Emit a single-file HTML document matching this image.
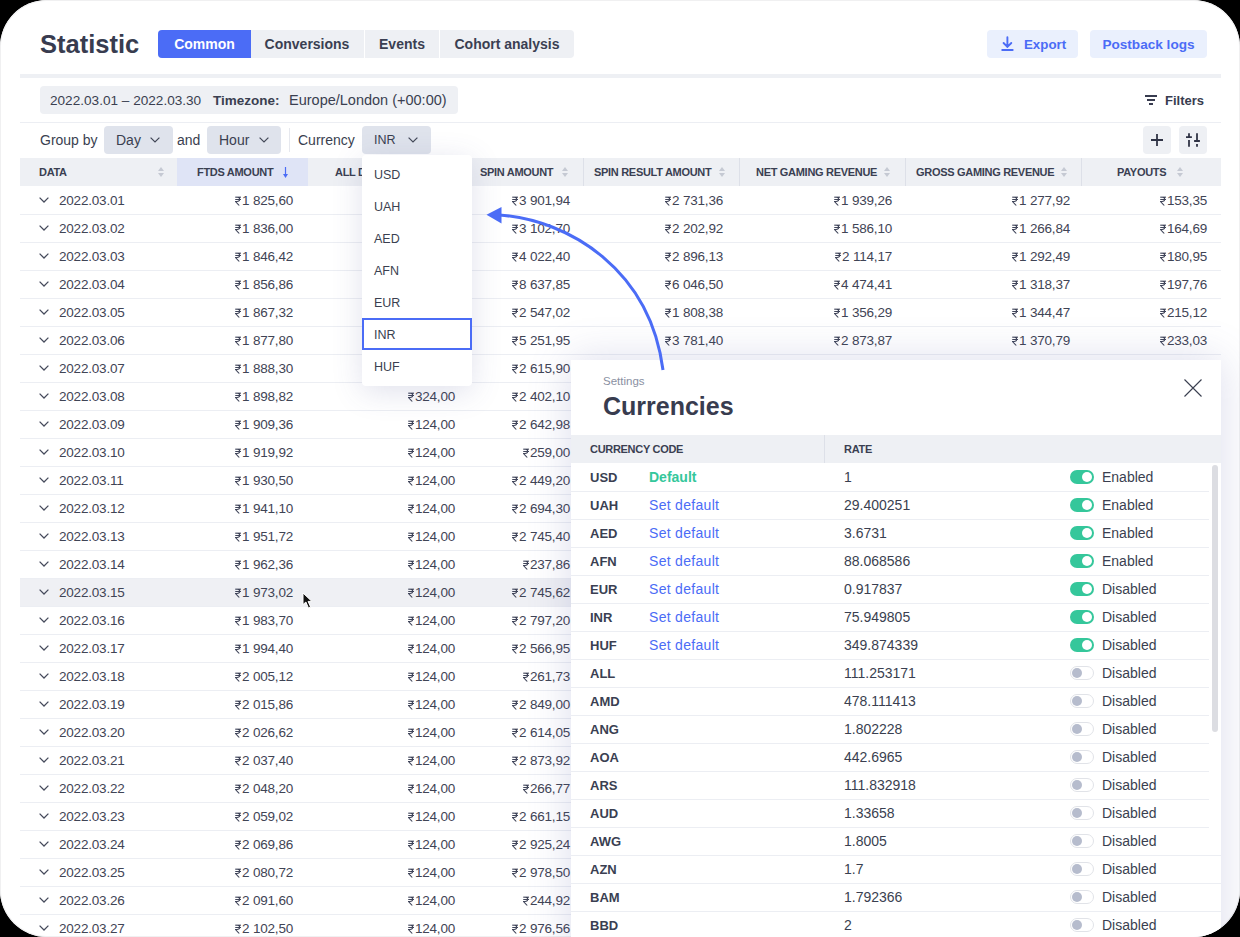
<!DOCTYPE html>
<html><head><meta charset="utf-8"><title>Statistic</title>
<style>
*{box-sizing:border-box;margin:0;padding:0}
html,body{width:1240px;height:937px;overflow:hidden;background:#000}
body{font-family:"Liberation Sans",sans-serif;color:#3a3f50;position:relative}
.frame{position:absolute;left:0;top:0;width:1240px;height:937px;background:#fff;border-radius:47px;overflow:hidden;box-shadow:inset 0 0 0 1px #f0f0f1}
.abs{position:absolute;white-space:nowrap}
.title{left:40px;top:27px;font-size:25.5px;font-weight:bold;color:#383c4f;line-height:34px}
.tabs{left:158px;top:30px;height:28px;width:416px;background:#eef0f4;border-radius:4px;overflow:hidden}
.tab{position:absolute;top:0;height:28px;line-height:28px;font-size:14px;font-weight:bold;color:#3a3f52;text-align:center}
.tab.on{background:#4b6cf6;color:#fff}
.tsep{position:absolute;top:0;width:1px;height:28px;background:#fff}
.btn{top:30px;height:28px;background:#eaf0fd;border-radius:4px;color:#4b6cf6;font-size:14px;font-weight:bold;line-height:30px}
.hbar{left:20px;top:74px;width:1201px;height:4px;background:#eef0f4}
.pill{left:40px;top:86px;width:418px;height:28px;background:#eef0f4;border-radius:4px;font-size:13.5px;line-height:29.5px;color:#3a3f50}
.hline{left:20px;height:1px;width:1201px;background:#eceef3}
.lbl{font-size:14px;line-height:28px;color:#3a3f50}
.sel{height:28px;top:126px;background:#dfe3ec;border-radius:4px;font-size:14px;line-height:28px;color:#3a3f50}
.sel svg{position:absolute;top:11px;width:10px;height:6px}
.ibtn{top:126px;width:28px;height:28px;background:#eef0f4;border-radius:4px}
.thead{left:20px;top:158px;width:1201px;height:28px;background:#eef0f4}
.th{position:absolute;top:0;height:28px;line-height:28px;font-size:11px;font-weight:bold;color:#3a3f52;letter-spacing:-0.3px}
.sort{position:absolute;top:9px;width:6px;height:10px}
.vsep{position:absolute;top:0;width:1px;height:28px;background:#dde0e8}
.row{position:absolute;left:20px;width:1201px;height:28px;border-bottom:1px solid #eceef3}
.row.hover{background:#eff0f4}
.cell{position:absolute;top:0;line-height:28px;font-size:13.5px;color:#3f4455;white-space:nowrap;letter-spacing:-0.2px}
.rs{width:6.5px;height:10px;display:inline-block;vertical-align:-0.6px;margin-right:0.8px}
.chev{position:absolute;left:19px;top:10.3px;width:10px;height:6px}
.dd{left:362px;top:155px;width:110px;height:231px;background:#fff;border-radius:4px;box-shadow:0 6px 30px rgba(70,80,140,0.17)}
.ddi{position:absolute;left:12px;height:32px;line-height:34px;font-size:12.5px;color:#3a3f50}
.panel{left:571px;top:360px;width:650px;height:600px;background:#fff;box-shadow:0 0 40px rgba(90,95,170,0.22)}
.ptitle{left:32px;top:30px;font-size:25px;font-weight:bold;color:#383c4f;line-height:32px}
.psub{left:32px;top:14px;font-size:11.5px;color:#8a90a2;line-height:14px}
.pthead{left:0;top:75px;width:650px;height:28px;background:#eef0f4}
.prow{position:absolute;left:0;width:638px;height:28px;border-bottom:1px solid #eceef3}
.pc{position:absolute;top:0;line-height:27px;font-size:14px;white-space:nowrap}
.tog{position:absolute;left:499px;top:6px;width:24px;height:14px;border-radius:7px}
.tog.on{background:#35c79b}
.tog.on::after{content:"";position:absolute;right:2px;top:2px;width:10px;height:10px;border-radius:50%;background:#fff}
.tog.off{background:#fff;border:1px solid #e1e3e8}
.tog.off::after{content:"";position:absolute;left:1px;top:1px;width:10px;height:10px;border-radius:50%;background:#b6bccd}
</style></head><body>
<svg width="0" height="0" style="position:absolute"><defs>
<symbol id="rup" viewBox="0 0 6.5 10"><path d="M0 0.8 H6.2 M0 3.4 H6.2 M0.3 0.8 H2.4 C4.2 0.8 4.8 2 4.8 3.2 C4.8 4.5 3.9 5.6 2 5.6 H0.3 L4.4 9.9" fill="none" stroke="#40455a" stroke-width="1.15"/></symbol>
</defs></svg>
<div class="frame">

<div class="abs title">Statistic</div>
<div class="abs tabs"><div class="tab on" style="left:0;width:93px">Common</div><div class="tab" style="left:92px;width:114px">Conversions</div><div class="tsep" style="left:206px"></div><div class="tab" style="left:207px;width:74px">Events</div><div class="tsep" style="left:281px"></div><div class="tab" style="left:282px;width:134px">Cohort analysis</div></div>
<div class="abs btn" style="left:987px;width:91px"><svg style="position:absolute;left:14px;top:6px" width="14" height="16" viewBox="0 0 14 16"><path d="M6.4 1.2 V11 M2.6 7 L6.4 10.9 L10.3 7" fill="none" stroke="#4b6cf6" stroke-width="1.9" stroke-linecap="round" stroke-linejoin="round"/><path d="M1.2 14 H11.7" stroke="#4b6cf6" stroke-width="1.9" stroke-linecap="round"/></svg><span style="position:absolute;left:37px;font-size:13.3px">Export</span></div>
<div class="abs btn" style="left:1090px;width:117px;text-align:center;font-size:13.6px">Postback logs</div>
<div class="abs hbar"></div>
<div class="abs pill"><span style="position:absolute;left:10px;font-size:13.6px">2022.03.01 – 2022.03.30</span><span style="position:absolute;left:173px;font-weight:bold">Timezone:</span><span style="position:absolute;left:249px;font-size:14.5px">Europe/London (+00:00)</span></div>
<svg class="abs" style="left:1145px;top:95px" width="12" height="11" viewBox="0 0 12 11"><path d="M0 1 H12 M2 5 H10 M4 9 H8" stroke="#383c4f" stroke-width="2"/></svg>
<div class="abs" style="left:1165px;top:92px;font-size:13px;font-weight:bold;line-height:18px;color:#383c4f">Filters</div>
<div class="abs hline" style="top:122px"></div>
<div class="abs lbl" style="left:40px;top:126px">Group by</div>
<div class="abs sel" style="left:104px;width:69px"><span style="position:absolute;left:12px">Day</span><svg viewBox="0 0 10 6" style="left:46px"><path d="M0.6 0.6 L5 5 L9.4 0.6" fill="none" stroke="#434858" stroke-width="1.2"/></svg></div>
<div class="abs lbl" style="left:177px;top:126px">and</div>
<div class="abs sel" style="left:207px;width:74px"><span style="position:absolute;left:12px">Hour</span><svg viewBox="0 0 10 6" style="left:52px"><path d="M0.6 0.6 L5 5 L9.4 0.6" fill="none" stroke="#434858" stroke-width="1.2"/></svg></div>
<div class="abs" style="left:289px;top:128px;width:1px;height:24px;background:#e6e8ee"></div>
<div class="abs lbl" style="left:298px;top:126px">Currency</div>
<div class="abs sel" style="left:362px;width:69px"><span style="position:absolute;left:12px;font-size:12.5px">INR</span><svg viewBox="0 0 10 6" style="left:45.5px"><path d="M0.6 0.6 L5 5 L9.4 0.6" fill="none" stroke="#434858" stroke-width="1.2"/></svg></div>
<div class="abs ibtn" style="left:1143px"><svg style="position:absolute;left:8px;top:8px" width="12" height="12" viewBox="0 0 12 12"><path d="M6 0 V12 M0 6 H12" stroke="#2f3345" stroke-width="1.8"/></svg></div>
<div class="abs ibtn" style="left:1179px"><svg style="position:absolute;left:0;top:0" width="28" height="28" viewBox="0 0 28 28"><path d="M10 7.2 V12 M7 11.1 H12.9 M10 14 V20.8 M18 7.2 V15.8 M15.1 15 H20.9 M18 17.9 V20.8" stroke="#2f3345" stroke-width="1.8"/></svg></div>
<div class="abs thead">
<div class="th" style="left:19px">DATA</div><svg class="sort" style="left:138px" viewBox="0 0 6 10"><path d="M3 0 L6 4 H0Z M3 10 L6 6 H0Z" fill="#c5c9d3"/></svg>
<div style="position:absolute;left:157px;top:0;width:131px;height:28px;background:#dfe4f6"></div>
<div class="th" style="left:177px">FTDS AMOUNT</div><svg style="position:absolute;left:263px;top:9px" width="5" height="11" viewBox="0 0 5 11"><path d="M2.5 0 V7.5" stroke="#4b6cf6" stroke-width="1.2"/><path d="M0 7 H5 L2.5 11 Z" fill="#4b6cf6"/></svg>
<div class="th" style="left:315px">ALL DEPOSITS</div>
<div class="th" style="left:460px">SPIN AMOUNT</div><svg class="sort" style="left:542px" viewBox="0 0 6 10"><path d="M3 0 L6 4 H0Z M3 10 L6 6 H0Z" fill="#c5c9d3"/></svg>
<div class="vsep" style="left:563px"></div>
<div class="th" style="left:574px">SPIN RESULT AMOUNT</div><svg class="sort" style="left:699px" viewBox="0 0 6 10"><path d="M3 0 L6 4 H0Z M3 10 L6 6 H0Z" fill="#c5c9d3"/></svg>
<div class="vsep" style="left:719px"></div>
<div class="th" style="left:736px">NET GAMING REVENUE</div><svg class="sort" style="left:864px" viewBox="0 0 6 10"><path d="M3 0 L6 4 H0Z M3 10 L6 6 H0Z" fill="#c5c9d3"/></svg>
<div class="vsep" style="left:885px"></div>
<div class="th" style="left:896px">GROSS GAMING REVENUE</div><svg class="sort" style="left:1041px" viewBox="0 0 6 10"><path d="M3 0 L6 4 H0Z M3 10 L6 6 H0Z" fill="#c5c9d3"/></svg>
<div class="vsep" style="left:1061px"></div>
<div class="th" style="left:1097px">PAYOUTS</div><svg class="sort" style="left:1157px" viewBox="0 0 6 10"><path d="M3 0 L6 4 H0Z M3 10 L6 6 H0Z" fill="#c5c9d3"/></svg>
</div>
<div class="row" style="top:187px">
<svg class="chev" viewBox="0 0 10 6"><path d="M0.6 0.6 L5 5 L9.4 0.6" fill="none" stroke="#464b5c" stroke-width="1.25"/></svg><div class="cell" style="left:39px">2022.03.01</div>
<div class="cell" style="right:928px"><svg class="rs" viewBox="0 0 7 10"><use href="#rup"/></svg>1 825,60</div>
<div class="cell" style="right:651px"><svg class="rs" viewBox="0 0 7 10"><use href="#rup"/></svg>3 901,94</div>
<div class="cell" style="right:498px"><svg class="rs" viewBox="0 0 7 10"><use href="#rup"/></svg>2 731,36</div>
<div class="cell" style="right:329px"><svg class="rs" viewBox="0 0 7 10"><use href="#rup"/></svg>1 939,26</div>
<div class="cell" style="right:151px"><svg class="rs" viewBox="0 0 7 10"><use href="#rup"/></svg>1 277,92</div>
<div class="cell" style="right:14px"><svg class="rs" viewBox="0 0 7 10"><use href="#rup"/></svg>153,35</div>
</div>
<div class="row" style="top:215px">
<svg class="chev" viewBox="0 0 10 6"><path d="M0.6 0.6 L5 5 L9.4 0.6" fill="none" stroke="#464b5c" stroke-width="1.25"/></svg><div class="cell" style="left:39px">2022.03.02</div>
<div class="cell" style="right:928px"><svg class="rs" viewBox="0 0 7 10"><use href="#rup"/></svg>1 836,00</div>
<div class="cell" style="right:651px"><svg class="rs" viewBox="0 0 7 10"><use href="#rup"/></svg>3 102,70</div>
<div class="cell" style="right:498px"><svg class="rs" viewBox="0 0 7 10"><use href="#rup"/></svg>2 202,92</div>
<div class="cell" style="right:329px"><svg class="rs" viewBox="0 0 7 10"><use href="#rup"/></svg>1 586,10</div>
<div class="cell" style="right:151px"><svg class="rs" viewBox="0 0 7 10"><use href="#rup"/></svg>1 266,84</div>
<div class="cell" style="right:14px"><svg class="rs" viewBox="0 0 7 10"><use href="#rup"/></svg>164,69</div>
</div>
<div class="row" style="top:243px">
<svg class="chev" viewBox="0 0 10 6"><path d="M0.6 0.6 L5 5 L9.4 0.6" fill="none" stroke="#464b5c" stroke-width="1.25"/></svg><div class="cell" style="left:39px">2022.03.03</div>
<div class="cell" style="right:928px"><svg class="rs" viewBox="0 0 7 10"><use href="#rup"/></svg>1 846,42</div>
<div class="cell" style="right:651px"><svg class="rs" viewBox="0 0 7 10"><use href="#rup"/></svg>4 022,40</div>
<div class="cell" style="right:498px"><svg class="rs" viewBox="0 0 7 10"><use href="#rup"/></svg>2 896,13</div>
<div class="cell" style="right:329px"><svg class="rs" viewBox="0 0 7 10"><use href="#rup"/></svg>2 114,17</div>
<div class="cell" style="right:151px"><svg class="rs" viewBox="0 0 7 10"><use href="#rup"/></svg>1 292,49</div>
<div class="cell" style="right:14px"><svg class="rs" viewBox="0 0 7 10"><use href="#rup"/></svg>180,95</div>
</div>
<div class="row" style="top:271px">
<svg class="chev" viewBox="0 0 10 6"><path d="M0.6 0.6 L5 5 L9.4 0.6" fill="none" stroke="#464b5c" stroke-width="1.25"/></svg><div class="cell" style="left:39px">2022.03.04</div>
<div class="cell" style="right:928px"><svg class="rs" viewBox="0 0 7 10"><use href="#rup"/></svg>1 856,86</div>
<div class="cell" style="right:651px"><svg class="rs" viewBox="0 0 7 10"><use href="#rup"/></svg>8 637,85</div>
<div class="cell" style="right:498px"><svg class="rs" viewBox="0 0 7 10"><use href="#rup"/></svg>6 046,50</div>
<div class="cell" style="right:329px"><svg class="rs" viewBox="0 0 7 10"><use href="#rup"/></svg>4 474,41</div>
<div class="cell" style="right:151px"><svg class="rs" viewBox="0 0 7 10"><use href="#rup"/></svg>1 318,37</div>
<div class="cell" style="right:14px"><svg class="rs" viewBox="0 0 7 10"><use href="#rup"/></svg>197,76</div>
</div>
<div class="row" style="top:299px">
<svg class="chev" viewBox="0 0 10 6"><path d="M0.6 0.6 L5 5 L9.4 0.6" fill="none" stroke="#464b5c" stroke-width="1.25"/></svg><div class="cell" style="left:39px">2022.03.05</div>
<div class="cell" style="right:928px"><svg class="rs" viewBox="0 0 7 10"><use href="#rup"/></svg>1 867,32</div>
<div class="cell" style="right:651px"><svg class="rs" viewBox="0 0 7 10"><use href="#rup"/></svg>2 547,02</div>
<div class="cell" style="right:498px"><svg class="rs" viewBox="0 0 7 10"><use href="#rup"/></svg>1 808,38</div>
<div class="cell" style="right:329px"><svg class="rs" viewBox="0 0 7 10"><use href="#rup"/></svg>1 356,29</div>
<div class="cell" style="right:151px"><svg class="rs" viewBox="0 0 7 10"><use href="#rup"/></svg>1 344,47</div>
<div class="cell" style="right:14px"><svg class="rs" viewBox="0 0 7 10"><use href="#rup"/></svg>215,12</div>
</div>
<div class="row" style="top:327px">
<svg class="chev" viewBox="0 0 10 6"><path d="M0.6 0.6 L5 5 L9.4 0.6" fill="none" stroke="#464b5c" stroke-width="1.25"/></svg><div class="cell" style="left:39px">2022.03.06</div>
<div class="cell" style="right:928px"><svg class="rs" viewBox="0 0 7 10"><use href="#rup"/></svg>1 877,80</div>
<div class="cell" style="right:651px"><svg class="rs" viewBox="0 0 7 10"><use href="#rup"/></svg>5 251,95</div>
<div class="cell" style="right:498px"><svg class="rs" viewBox="0 0 7 10"><use href="#rup"/></svg>3 781,40</div>
<div class="cell" style="right:329px"><svg class="rs" viewBox="0 0 7 10"><use href="#rup"/></svg>2 873,87</div>
<div class="cell" style="right:151px"><svg class="rs" viewBox="0 0 7 10"><use href="#rup"/></svg>1 370,79</div>
<div class="cell" style="right:14px"><svg class="rs" viewBox="0 0 7 10"><use href="#rup"/></svg>233,03</div>
</div>
<div class="row" style="top:355px">
<svg class="chev" viewBox="0 0 10 6"><path d="M0.6 0.6 L5 5 L9.4 0.6" fill="none" stroke="#464b5c" stroke-width="1.25"/></svg><div class="cell" style="left:39px">2022.03.07</div>
<div class="cell" style="right:928px"><svg class="rs" viewBox="0 0 7 10"><use href="#rup"/></svg>1 888,30</div>
<div class="cell" style="right:651px"><svg class="rs" viewBox="0 0 7 10"><use href="#rup"/></svg>2 615,90</div>
</div>
<div class="row" style="top:383px">
<svg class="chev" viewBox="0 0 10 6"><path d="M0.6 0.6 L5 5 L9.4 0.6" fill="none" stroke="#464b5c" stroke-width="1.25"/></svg><div class="cell" style="left:39px">2022.03.08</div>
<div class="cell" style="right:928px"><svg class="rs" viewBox="0 0 7 10"><use href="#rup"/></svg>1 898,82</div>
<div class="cell" style="right:766px"><svg class="rs" viewBox="0 0 7 10"><use href="#rup"/></svg>324,00</div>
<div class="cell" style="right:651px"><svg class="rs" viewBox="0 0 7 10"><use href="#rup"/></svg>2 402,10</div>
</div>
<div class="row" style="top:411px">
<svg class="chev" viewBox="0 0 10 6"><path d="M0.6 0.6 L5 5 L9.4 0.6" fill="none" stroke="#464b5c" stroke-width="1.25"/></svg><div class="cell" style="left:39px">2022.03.09</div>
<div class="cell" style="right:928px"><svg class="rs" viewBox="0 0 7 10"><use href="#rup"/></svg>1 909,36</div>
<div class="cell" style="right:766px"><svg class="rs" viewBox="0 0 7 10"><use href="#rup"/></svg>124,00</div>
<div class="cell" style="right:651px"><svg class="rs" viewBox="0 0 7 10"><use href="#rup"/></svg>2 642,98</div>
</div>
<div class="row" style="top:439px">
<svg class="chev" viewBox="0 0 10 6"><path d="M0.6 0.6 L5 5 L9.4 0.6" fill="none" stroke="#464b5c" stroke-width="1.25"/></svg><div class="cell" style="left:39px">2022.03.10</div>
<div class="cell" style="right:928px"><svg class="rs" viewBox="0 0 7 10"><use href="#rup"/></svg>1 919,92</div>
<div class="cell" style="right:766px"><svg class="rs" viewBox="0 0 7 10"><use href="#rup"/></svg>124,00</div>
<div class="cell" style="right:651px"><svg class="rs" viewBox="0 0 7 10"><use href="#rup"/></svg>259,00</div>
</div>
<div class="row" style="top:467px">
<svg class="chev" viewBox="0 0 10 6"><path d="M0.6 0.6 L5 5 L9.4 0.6" fill="none" stroke="#464b5c" stroke-width="1.25"/></svg><div class="cell" style="left:39px">2022.03.11</div>
<div class="cell" style="right:928px"><svg class="rs" viewBox="0 0 7 10"><use href="#rup"/></svg>1 930,50</div>
<div class="cell" style="right:766px"><svg class="rs" viewBox="0 0 7 10"><use href="#rup"/></svg>124,00</div>
<div class="cell" style="right:651px"><svg class="rs" viewBox="0 0 7 10"><use href="#rup"/></svg>2 449,20</div>
</div>
<div class="row" style="top:495px">
<svg class="chev" viewBox="0 0 10 6"><path d="M0.6 0.6 L5 5 L9.4 0.6" fill="none" stroke="#464b5c" stroke-width="1.25"/></svg><div class="cell" style="left:39px">2022.03.12</div>
<div class="cell" style="right:928px"><svg class="rs" viewBox="0 0 7 10"><use href="#rup"/></svg>1 941,10</div>
<div class="cell" style="right:766px"><svg class="rs" viewBox="0 0 7 10"><use href="#rup"/></svg>124,00</div>
<div class="cell" style="right:651px"><svg class="rs" viewBox="0 0 7 10"><use href="#rup"/></svg>2 694,30</div>
</div>
<div class="row" style="top:523px">
<svg class="chev" viewBox="0 0 10 6"><path d="M0.6 0.6 L5 5 L9.4 0.6" fill="none" stroke="#464b5c" stroke-width="1.25"/></svg><div class="cell" style="left:39px">2022.03.13</div>
<div class="cell" style="right:928px"><svg class="rs" viewBox="0 0 7 10"><use href="#rup"/></svg>1 951,72</div>
<div class="cell" style="right:766px"><svg class="rs" viewBox="0 0 7 10"><use href="#rup"/></svg>124,00</div>
<div class="cell" style="right:651px"><svg class="rs" viewBox="0 0 7 10"><use href="#rup"/></svg>2 745,40</div>
</div>
<div class="row" style="top:551px">
<svg class="chev" viewBox="0 0 10 6"><path d="M0.6 0.6 L5 5 L9.4 0.6" fill="none" stroke="#464b5c" stroke-width="1.25"/></svg><div class="cell" style="left:39px">2022.03.14</div>
<div class="cell" style="right:928px"><svg class="rs" viewBox="0 0 7 10"><use href="#rup"/></svg>1 962,36</div>
<div class="cell" style="right:766px"><svg class="rs" viewBox="0 0 7 10"><use href="#rup"/></svg>124,00</div>
<div class="cell" style="right:651px"><svg class="rs" viewBox="0 0 7 10"><use href="#rup"/></svg>237,86</div>
</div>
<div class="row hover" style="top:579px">
<svg class="chev" viewBox="0 0 10 6"><path d="M0.6 0.6 L5 5 L9.4 0.6" fill="none" stroke="#464b5c" stroke-width="1.25"/></svg><div class="cell" style="left:39px">2022.03.15</div>
<div class="cell" style="right:928px"><svg class="rs" viewBox="0 0 7 10"><use href="#rup"/></svg>1 973,02</div>
<div class="cell" style="right:766px"><svg class="rs" viewBox="0 0 7 10"><use href="#rup"/></svg>124,00</div>
<div class="cell" style="right:651px"><svg class="rs" viewBox="0 0 7 10"><use href="#rup"/></svg>2 745,62</div>
</div>
<div class="row" style="top:607px">
<svg class="chev" viewBox="0 0 10 6"><path d="M0.6 0.6 L5 5 L9.4 0.6" fill="none" stroke="#464b5c" stroke-width="1.25"/></svg><div class="cell" style="left:39px">2022.03.16</div>
<div class="cell" style="right:928px"><svg class="rs" viewBox="0 0 7 10"><use href="#rup"/></svg>1 983,70</div>
<div class="cell" style="right:766px"><svg class="rs" viewBox="0 0 7 10"><use href="#rup"/></svg>124,00</div>
<div class="cell" style="right:651px"><svg class="rs" viewBox="0 0 7 10"><use href="#rup"/></svg>2 797,20</div>
</div>
<div class="row" style="top:635px">
<svg class="chev" viewBox="0 0 10 6"><path d="M0.6 0.6 L5 5 L9.4 0.6" fill="none" stroke="#464b5c" stroke-width="1.25"/></svg><div class="cell" style="left:39px">2022.03.17</div>
<div class="cell" style="right:928px"><svg class="rs" viewBox="0 0 7 10"><use href="#rup"/></svg>1 994,40</div>
<div class="cell" style="right:766px"><svg class="rs" viewBox="0 0 7 10"><use href="#rup"/></svg>124,00</div>
<div class="cell" style="right:651px"><svg class="rs" viewBox="0 0 7 10"><use href="#rup"/></svg>2 566,95</div>
</div>
<div class="row" style="top:663px">
<svg class="chev" viewBox="0 0 10 6"><path d="M0.6 0.6 L5 5 L9.4 0.6" fill="none" stroke="#464b5c" stroke-width="1.25"/></svg><div class="cell" style="left:39px">2022.03.18</div>
<div class="cell" style="right:928px"><svg class="rs" viewBox="0 0 7 10"><use href="#rup"/></svg>2 005,12</div>
<div class="cell" style="right:766px"><svg class="rs" viewBox="0 0 7 10"><use href="#rup"/></svg>124,00</div>
<div class="cell" style="right:651px"><svg class="rs" viewBox="0 0 7 10"><use href="#rup"/></svg>261,73</div>
</div>
<div class="row" style="top:691px">
<svg class="chev" viewBox="0 0 10 6"><path d="M0.6 0.6 L5 5 L9.4 0.6" fill="none" stroke="#464b5c" stroke-width="1.25"/></svg><div class="cell" style="left:39px">2022.03.19</div>
<div class="cell" style="right:928px"><svg class="rs" viewBox="0 0 7 10"><use href="#rup"/></svg>2 015,86</div>
<div class="cell" style="right:766px"><svg class="rs" viewBox="0 0 7 10"><use href="#rup"/></svg>124,00</div>
<div class="cell" style="right:651px"><svg class="rs" viewBox="0 0 7 10"><use href="#rup"/></svg>2 849,00</div>
</div>
<div class="row" style="top:719px">
<svg class="chev" viewBox="0 0 10 6"><path d="M0.6 0.6 L5 5 L9.4 0.6" fill="none" stroke="#464b5c" stroke-width="1.25"/></svg><div class="cell" style="left:39px">2022.03.20</div>
<div class="cell" style="right:928px"><svg class="rs" viewBox="0 0 7 10"><use href="#rup"/></svg>2 026,62</div>
<div class="cell" style="right:766px"><svg class="rs" viewBox="0 0 7 10"><use href="#rup"/></svg>124,00</div>
<div class="cell" style="right:651px"><svg class="rs" viewBox="0 0 7 10"><use href="#rup"/></svg>2 614,05</div>
</div>
<div class="row" style="top:747px">
<svg class="chev" viewBox="0 0 10 6"><path d="M0.6 0.6 L5 5 L9.4 0.6" fill="none" stroke="#464b5c" stroke-width="1.25"/></svg><div class="cell" style="left:39px">2022.03.21</div>
<div class="cell" style="right:928px"><svg class="rs" viewBox="0 0 7 10"><use href="#rup"/></svg>2 037,40</div>
<div class="cell" style="right:766px"><svg class="rs" viewBox="0 0 7 10"><use href="#rup"/></svg>124,00</div>
<div class="cell" style="right:651px"><svg class="rs" viewBox="0 0 7 10"><use href="#rup"/></svg>2 873,92</div>
</div>
<div class="row" style="top:775px">
<svg class="chev" viewBox="0 0 10 6"><path d="M0.6 0.6 L5 5 L9.4 0.6" fill="none" stroke="#464b5c" stroke-width="1.25"/></svg><div class="cell" style="left:39px">2022.03.22</div>
<div class="cell" style="right:928px"><svg class="rs" viewBox="0 0 7 10"><use href="#rup"/></svg>2 048,20</div>
<div class="cell" style="right:766px"><svg class="rs" viewBox="0 0 7 10"><use href="#rup"/></svg>124,00</div>
<div class="cell" style="right:651px"><svg class="rs" viewBox="0 0 7 10"><use href="#rup"/></svg>266,77</div>
</div>
<div class="row" style="top:803px">
<svg class="chev" viewBox="0 0 10 6"><path d="M0.6 0.6 L5 5 L9.4 0.6" fill="none" stroke="#464b5c" stroke-width="1.25"/></svg><div class="cell" style="left:39px">2022.03.23</div>
<div class="cell" style="right:928px"><svg class="rs" viewBox="0 0 7 10"><use href="#rup"/></svg>2 059,02</div>
<div class="cell" style="right:766px"><svg class="rs" viewBox="0 0 7 10"><use href="#rup"/></svg>124,00</div>
<div class="cell" style="right:651px"><svg class="rs" viewBox="0 0 7 10"><use href="#rup"/></svg>2 661,15</div>
</div>
<div class="row" style="top:831px">
<svg class="chev" viewBox="0 0 10 6"><path d="M0.6 0.6 L5 5 L9.4 0.6" fill="none" stroke="#464b5c" stroke-width="1.25"/></svg><div class="cell" style="left:39px">2022.03.24</div>
<div class="cell" style="right:928px"><svg class="rs" viewBox="0 0 7 10"><use href="#rup"/></svg>2 069,86</div>
<div class="cell" style="right:766px"><svg class="rs" viewBox="0 0 7 10"><use href="#rup"/></svg>124,00</div>
<div class="cell" style="right:651px"><svg class="rs" viewBox="0 0 7 10"><use href="#rup"/></svg>2 925,24</div>
</div>
<div class="row" style="top:859px">
<svg class="chev" viewBox="0 0 10 6"><path d="M0.6 0.6 L5 5 L9.4 0.6" fill="none" stroke="#464b5c" stroke-width="1.25"/></svg><div class="cell" style="left:39px">2022.03.25</div>
<div class="cell" style="right:928px"><svg class="rs" viewBox="0 0 7 10"><use href="#rup"/></svg>2 080,72</div>
<div class="cell" style="right:766px"><svg class="rs" viewBox="0 0 7 10"><use href="#rup"/></svg>124,00</div>
<div class="cell" style="right:651px"><svg class="rs" viewBox="0 0 7 10"><use href="#rup"/></svg>2 978,50</div>
</div>
<div class="row" style="top:887px">
<svg class="chev" viewBox="0 0 10 6"><path d="M0.6 0.6 L5 5 L9.4 0.6" fill="none" stroke="#464b5c" stroke-width="1.25"/></svg><div class="cell" style="left:39px">2022.03.26</div>
<div class="cell" style="right:928px"><svg class="rs" viewBox="0 0 7 10"><use href="#rup"/></svg>2 091,60</div>
<div class="cell" style="right:766px"><svg class="rs" viewBox="0 0 7 10"><use href="#rup"/></svg>124,00</div>
<div class="cell" style="right:651px"><svg class="rs" viewBox="0 0 7 10"><use href="#rup"/></svg>244,92</div>
</div>
<div class="row" style="top:915px">
<svg class="chev" viewBox="0 0 10 6"><path d="M0.6 0.6 L5 5 L9.4 0.6" fill="none" stroke="#464b5c" stroke-width="1.25"/></svg><div class="cell" style="left:39px">2022.03.27</div>
<div class="cell" style="right:928px"><svg class="rs" viewBox="0 0 7 10"><use href="#rup"/></svg>2 102,50</div>
<div class="cell" style="right:766px"><svg class="rs" viewBox="0 0 7 10"><use href="#rup"/></svg>124,00</div>
<div class="cell" style="right:651px"><svg class="rs" viewBox="0 0 7 10"><use href="#rup"/></svg>2 976,56</div>
</div>
<svg class="abs" style="left:302px;top:592px" width="13" height="18" viewBox="0 0 13 18"><path d="M1 1 V12.6 L3.9 10 L6.4 15.9 L8.6 15 L6.1 9.4 H9.9 Z" fill="#111" stroke="#fff" stroke-width="1"/></svg>
<div class="abs dd">
<div class="ddi" style="top:3px">USD</div>
<div class="ddi" style="top:35px">UAH</div>
<div class="ddi" style="top:67px">AED</div>
<div class="ddi" style="top:99px">AFN</div>
<div class="ddi" style="top:131px">EUR</div>
<div class="ddi" style="top:163px">INR</div>
<div class="ddi" style="top:195px">HUF</div>
<div style="position:absolute;left:0;top:163px;width:110px;height:32px;border:2px solid #4b6cf6"></div>
</div>
<div class="abs panel">
<div class="abs psub">Settings</div>
<div class="abs ptitle">Currencies</div>
<svg class="abs" style="left:613px;top:19px" width="18" height="18" viewBox="0 0 18 18"><path d="M0.5 0.5 L17.5 17.5 M17.5 0.5 L0.5 17.5" stroke="#3a3f50" stroke-width="1.1"/></svg>
<div class="abs pthead"><div class="th" style="left:19px">CURRENCY CODE</div><div class="vsep" style="left:253px"></div><div class="th" style="left:273px">RATE</div></div>
<div class="prow" style="top:104px">
<div class="pc" style="left:19px;font-weight:bold;color:#3a3f52;font-size:13px">USD</div>
<div class="pc" style="left:78px;font-weight:bold;color:#35c79b">Default</div>
<div class="pc" style="left:273px;color:#3a3f50">1</div>
<div class="tog on"></div>
<div class="pc" style="left:531px;color:#3a3f50">Enabled</div>
</div>
<div class="prow" style="top:132px">
<div class="pc" style="left:19px;font-weight:bold;color:#3a3f52;font-size:13px">UAH</div>
<div class="pc" style="left:78px;color:#4b6cf6;letter-spacing:0.3px">Set default</div>
<div class="pc" style="left:273px;color:#3a3f50">29.400251</div>
<div class="tog on"></div>
<div class="pc" style="left:531px;color:#3a3f50">Enabled</div>
</div>
<div class="prow" style="top:160px">
<div class="pc" style="left:19px;font-weight:bold;color:#3a3f52;font-size:13px">AED</div>
<div class="pc" style="left:78px;color:#4b6cf6;letter-spacing:0.3px">Set default</div>
<div class="pc" style="left:273px;color:#3a3f50">3.6731</div>
<div class="tog on"></div>
<div class="pc" style="left:531px;color:#3a3f50">Enabled</div>
</div>
<div class="prow" style="top:188px">
<div class="pc" style="left:19px;font-weight:bold;color:#3a3f52;font-size:13px">AFN</div>
<div class="pc" style="left:78px;color:#4b6cf6;letter-spacing:0.3px">Set default</div>
<div class="pc" style="left:273px;color:#3a3f50">88.068586</div>
<div class="tog on"></div>
<div class="pc" style="left:531px;color:#3a3f50">Enabled</div>
</div>
<div class="prow" style="top:216px">
<div class="pc" style="left:19px;font-weight:bold;color:#3a3f52;font-size:13px">EUR</div>
<div class="pc" style="left:78px;color:#4b6cf6;letter-spacing:0.3px">Set default</div>
<div class="pc" style="left:273px;color:#3a3f50">0.917837</div>
<div class="tog on"></div>
<div class="pc" style="left:531px;color:#3a3f50">Disabled</div>
</div>
<div class="prow" style="top:244px">
<div class="pc" style="left:19px;font-weight:bold;color:#3a3f52;font-size:13px">INR</div>
<div class="pc" style="left:78px;color:#4b6cf6;letter-spacing:0.3px">Set default</div>
<div class="pc" style="left:273px;color:#3a3f50">75.949805</div>
<div class="tog on"></div>
<div class="pc" style="left:531px;color:#3a3f50">Disabled</div>
</div>
<div class="prow" style="top:272px">
<div class="pc" style="left:19px;font-weight:bold;color:#3a3f52;font-size:13px">HUF</div>
<div class="pc" style="left:78px;color:#4b6cf6;letter-spacing:0.3px">Set default</div>
<div class="pc" style="left:273px;color:#3a3f50">349.874339</div>
<div class="tog on"></div>
<div class="pc" style="left:531px;color:#3a3f50">Disabled</div>
</div>
<div class="prow" style="top:300px">
<div class="pc" style="left:19px;font-weight:bold;color:#3a3f52;font-size:13px">ALL</div>
<div class="pc" style="left:273px;color:#3a3f50">111.253171</div>
<div class="tog off"></div>
<div class="pc" style="left:531px;color:#3a3f50">Disabled</div>
</div>
<div class="prow" style="top:328px">
<div class="pc" style="left:19px;font-weight:bold;color:#3a3f52;font-size:13px">AMD</div>
<div class="pc" style="left:273px;color:#3a3f50">478.111413</div>
<div class="tog off"></div>
<div class="pc" style="left:531px;color:#3a3f50">Disabled</div>
</div>
<div class="prow" style="top:356px">
<div class="pc" style="left:19px;font-weight:bold;color:#3a3f52;font-size:13px">ANG</div>
<div class="pc" style="left:273px;color:#3a3f50">1.802228</div>
<div class="tog off"></div>
<div class="pc" style="left:531px;color:#3a3f50">Disabled</div>
</div>
<div class="prow" style="top:384px">
<div class="pc" style="left:19px;font-weight:bold;color:#3a3f52;font-size:13px">AOA</div>
<div class="pc" style="left:273px;color:#3a3f50">442.6965</div>
<div class="tog off"></div>
<div class="pc" style="left:531px;color:#3a3f50">Disabled</div>
</div>
<div class="prow" style="top:412px">
<div class="pc" style="left:19px;font-weight:bold;color:#3a3f52;font-size:13px">ARS</div>
<div class="pc" style="left:273px;color:#3a3f50">111.832918</div>
<div class="tog off"></div>
<div class="pc" style="left:531px;color:#3a3f50">Disabled</div>
</div>
<div class="prow" style="top:440px">
<div class="pc" style="left:19px;font-weight:bold;color:#3a3f52;font-size:13px">AUD</div>
<div class="pc" style="left:273px;color:#3a3f50">1.33658</div>
<div class="tog off"></div>
<div class="pc" style="left:531px;color:#3a3f50">Disabled</div>
</div>
<div class="prow" style="top:468px;width:650px">
<div class="pc" style="left:19px;font-weight:bold;color:#3a3f52;font-size:13px">AWG</div>
<div class="pc" style="left:273px;color:#3a3f50">1.8005</div>
<div class="tog off"></div>
<div class="pc" style="left:531px;color:#3a3f50">Disabled</div>
</div>
<div class="prow" style="top:496px;width:650px">
<div class="pc" style="left:19px;font-weight:bold;color:#3a3f52;font-size:13px">AZN</div>
<div class="pc" style="left:273px;color:#3a3f50">1.7</div>
<div class="tog off"></div>
<div class="pc" style="left:531px;color:#3a3f50">Disabled</div>
</div>
<div class="prow" style="top:524px;width:650px">
<div class="pc" style="left:19px;font-weight:bold;color:#3a3f52;font-size:13px">BAM</div>
<div class="pc" style="left:273px;color:#3a3f50">1.792366</div>
<div class="tog off"></div>
<div class="pc" style="left:531px;color:#3a3f50">Disabled</div>
</div>
<div class="prow" style="top:552px;width:650px">
<div class="pc" style="left:19px;font-weight:bold;color:#3a3f52;font-size:13px">BBD</div>
<div class="pc" style="left:273px;color:#3a3f50">2</div>
<div class="tog off"></div>
<div class="pc" style="left:531px;color:#3a3f50">Disabled</div>
</div>
<div class="abs" style="left:641px;top:105px;width:6px;height:267px;border-radius:3px;background:#dcdde2"></div>
</div>
<svg class="abs" style="left:0;top:0" width="1240" height="937" viewBox="0 0 1240 937"><path d="M499 215 C570 220 650 270 663 370" fill="none" stroke="#4b6cf6" stroke-width="3"/><path d="M486.5 214.7 L501.5 207 L501.5 223.5 Z" fill="#4b6cf6"/></svg>
</div></body></html>
